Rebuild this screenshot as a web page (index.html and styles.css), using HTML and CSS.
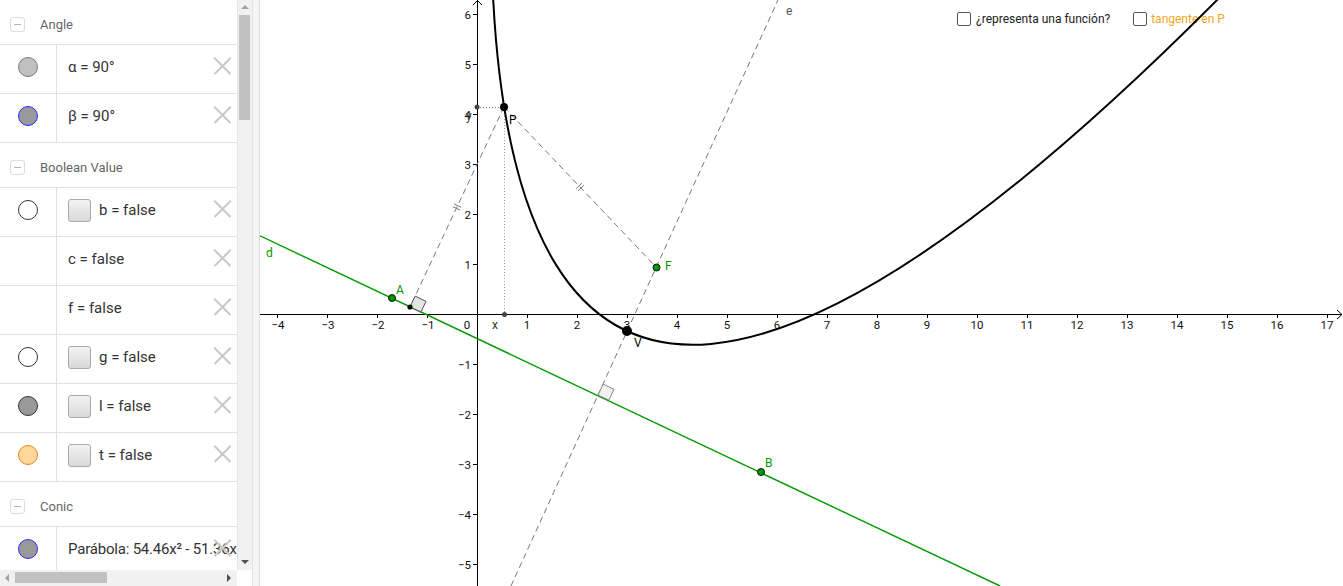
FILE: index.html
```html
<!DOCTYPE html>
<html>
<head>
<meta charset="utf-8">
<link rel="stylesheet" href="styles.css">
</head>
<body>
<div class="app">
  <div class="panel">
    <div class="list">
      <div class="header"><span class="minus"></span><span class="htext">Angle</span></div>
      <div class="item"><div class="mark"><span class="dot d-alpha"></span></div><div class="body"><span class="txt">α = 90°</span></div><span class="del"></span></div>
      <div class="item"><div class="mark"><span class="dot d-beta"></span></div><div class="body"><span class="txt">β = 90°</span></div><span class="del"></span></div>
      <div class="header"><span class="minus"></span><span class="htext">Boolean Value</span></div>
      <div class="item"><div class="mark"><span class="dot d-white"></span></div><div class="body"><span class="cb"></span><span class="txt">b = false</span></div><span class="del"></span></div>
      <div class="item"><div class="mark"></div><div class="body"><span class="txt">c = false</span></div><span class="del"></span></div>
      <div class="item"><div class="mark"></div><div class="body"><span class="txt">f = false</span></div><span class="del"></span></div>
      <div class="item"><div class="mark"><span class="dot d-white"></span></div><div class="body"><span class="cb"></span><span class="txt">g = false</span></div><span class="del"></span></div>
      <div class="item"><div class="mark"><span class="dot d-gray"></span></div><div class="body"><span class="cb"></span><span class="txt">l = false</span></div><span class="del"></span></div>
      <div class="item"><div class="mark"><span class="dot d-orange"></span></div><div class="body"><span class="cb"></span><span class="txt">t = false</span></div><span class="del"></span></div>
      <div class="header"><span class="minus"></span><span class="htext">Conic</span></div>
      <div class="item"><div class="mark"><span class="dot d-beta"></span></div><div class="body"><span class="txt nowrap">Parábola: 54.46x² - 51.36x y</span></div><span class="del"></span></div>
    </div>
    <div class="vscroll">
      <span class="arr-up"></span>
      <span class="vthumb"></span>
      <span class="arr-down"></span>
    </div>
    <div class="hscroll">
      <span class="arr-left"></span>
      <span class="hthumb"></span>
      <span class="arr-right"></span>
    </div>
    <div class="corner"></div>
  </div>
  <div class="divider"></div>
  <div class="graphics">
    <div class="checks">
      <span class="gcb"></span><span class="glabel">¿representa una función?</span>
      <span class="gcb gcb2"></span><span class="glabel orange">tangente en P</span>
    </div>
    <svg class="plot" width="1084" height="586" viewBox="259 0 1084 586" xmlns="http://www.w3.org/2000/svg">
      <g stroke="#000" stroke-width="1" fill="none">
        <line x1="259" y1="314.5" x2="1341" y2="314.5"/>
        <polyline points="1336,310 1341,314.5 1336,319"/>
        <line x1="476.5" y1="0" x2="476.5" y2="586"/>
        <polyline points="472,5 476.5,0.5 481,5"/>
        <path d="M276.5 314v4 M326.5 314v4 M376.5 314v4 M426.5 314v4 M526.5 314v4 M576.5 314v4 M626.5 314v4 M676.5 314v4 M726.5 314v4 M776.5 314v4 M826.5 314v4 M876.5 314v4 M926.5 314v4 M976.5 314v4 M1026.5 314v4 M1076.5 314v4 M1126.5 314v4 M1176.5 314v4 M1226.5 314v4 M1276.5 314v4 M1326.5 314v4"/>
        <path d="M472 14.5h4 M472 64.5h4 M472 114.5h4 M472 164.5h4 M472 214.5h4 M472 264.5h4 M472 364.5h4 M472 414.5h4 M472 464.5h4 M472 514.5h4 M472 564.5h4"/>
      </g>
      <g class="ax" text-anchor="middle">
        <text x="277" y="329">−4</text>
        <text x="327" y="329">−3</text>
        <text x="377" y="329">−2</text>
        <text x="427" y="329">−1</text>
        <text x="466" y="329">0</text>
        <text x="526" y="329">1</text>
        <text x="576" y="329">2</text>
        <text x="626" y="329">3</text>
        <text x="676" y="329">4</text>
        <text x="726" y="329">5</text>
        <text x="776" y="329">6</text>
        <text x="826" y="329">7</text>
        <text x="876" y="329">8</text>
        <text x="926" y="329">9</text>
        <text x="976" y="329">10</text>
        <text x="1026" y="329">11</text>
        <text x="1076" y="329">12</text>
        <text x="1126" y="329">13</text>
        <text x="1176" y="329">14</text>
        <text x="1226" y="329">15</text>
        <text x="1276" y="329">16</text>
        <text x="1326" y="329">17</text>
      </g>
      <g class="ax" text-anchor="end">
        <text x="470" y="19">6</text>
        <text x="470" y="69">5</text>
        <text x="470" y="119">4</text>
        <text x="470" y="169">3</text>
        <text x="470" y="219">2</text>
        <text x="470" y="269">1</text>
        <text x="470" y="369">−1</text>
        <text x="470" y="419">−2</text>
        <text x="470" y="469">−3</text>
        <text x="470" y="519">−4</text>
        <text x="470" y="569">−5</text>
      </g>
      <line x1="259" y1="235.8" x2="999" y2="586" stroke="#009900" stroke-width="1.4"/>
      <line x1="510" y1="586" x2="777" y2="0" stroke="#777" stroke-width="1" stroke-dasharray="6,4"/>
      <line x1="503" y1="107" x2="655" y2="267" stroke="#777" stroke-width="1" stroke-dasharray="6,4"/>
      <line x1="503" y1="107" x2="409" y2="307" stroke="#777" stroke-width="1" stroke-dasharray="6,4"/>
      <path d="M575.1 188.7 L580.9 183.1 M577.1 190.9 L582.9 185.3" stroke="#777" stroke-width="1" fill="none"/>
      <path d="M451.8 206.7 L459 210.1 M453 203.9 L460.2 207.3" stroke="#777" stroke-width="1" fill="none"/>
      <polygon points="409,307 419.9,312.1 425,301.3 414.1,296.1" fill="#ddd" fill-opacity="0.8" stroke="#555" stroke-width="1"/>
      <polygon points="597,395 607.9,400.1 613,389.3 602.1,384.2" fill="#eee" fill-opacity="0.8" stroke="#888" stroke-width="1"/>
      <line x1="476" y1="107.5" x2="503" y2="107.5" stroke="#777" stroke-width="1" stroke-dasharray="1,2"/>
      <line x1="503.5" y1="107" x2="503.5" y2="314" stroke="#999" stroke-width="1" stroke-dasharray="1,2"/>
      <path d="M491.8,-8.3 Q526.8,732.3 1294.3,-80.7" stroke="#000" stroke-width="2" fill="none"/>
      <circle cx="476" cy="107" r="2.5" fill="#444"/>
      <circle cx="503.5" cy="314.5" r="2.5" fill="#444"/>
      <circle cx="409" cy="307" r="2.6" fill="#000"/>
      <circle cx="391" cy="298" r="3.5" fill="#009900" stroke="#111" stroke-width="1"/>
      <circle cx="760" cy="472" r="3.5" fill="#009900" stroke="#111" stroke-width="1"/>
      <circle cx="655.5" cy="267.5" r="3.5" fill="#009900" stroke="#111" stroke-width="1"/>
      <circle cx="503" cy="107" r="4" fill="#000"/>
      <circle cx="626" cy="331" r="5" fill="#000"/>
      <g class="lbl">
        <text x="265" y="257" fill="#009900">d</text>
        <text x="785" y="15" fill="#555">e</text>
        <text x="395" y="294" fill="#009900">A</text>
        <text x="764" y="467" fill="#009900">B</text>
        <text x="664" y="270" fill="#009900">F</text>
        <text x="508" y="124" fill="#000">P</text>
        <text x="633" y="347" fill="#000">V</text>
        <text x="491" y="329" fill="#333">x</text>
        <text x="465" y="120" fill="#333">y</text>
      </g>
    </svg>
  </div>
</div>
</body>
</html>
```
FILE: styles.css
```css
html, body {
  margin: 0;
  padding: 0;
  background: #fff;
  font-family: Roboto, "Liberation Sans", sans-serif;
}
.app {
  display: flex;
  width: 1343px;
  height: 586px;
  overflow: hidden;
}
.panel {
  display: grid;
  grid-template-columns: 237px 15px;
  grid-template-rows: 570px 16px;
  width: 252px;
  flex: none;
}
.list {
  overflow: hidden;
  background: #fff;
}
.header {
  border-bottom: 1px solid #e0e0e0;
  display: flex;
  align-items: center;
  padding-top: 5px;
  box-sizing: border-box;
  height: 45px;
}
.minus {
  width: 13px;
  height: 13px;
  border: 1px solid #dcdcdc;
  border-radius: 3px;
  margin-left: 10px;
  position: relative;
  flex: none;
}
.minus::after {
  content: "";
  position: absolute;
  left: 3px;
  right: 3px;
  top: 6px;
  height: 1px;
  background: #b5b5b5;
}
.htext {
  margin-left: 15px;
  font-size: 13px;
  color: #666;
}
.item {
  height: 49px;
  box-sizing: border-box;
  border-bottom: 1px solid #e0e0e0;
  display: flex;
  align-items: stretch;
  position: relative;
}
.mark {
  width: 56px;
  border-right: 1px solid #e0e0e0;
  display: flex;
  align-items: center;
  justify-content: center;
  padding-bottom: 4px;
  flex: none;
}
.dot {
  width: 18px;
  height: 18px;
  border-radius: 50%;
  border: 1px solid #555;
  box-sizing: content-box;
}
.d-alpha { background: #c0c0c0; border-color: #777; }
.d-beta { background: #999; border-color: #2b2bff; }
.d-white { background: #fff; border-color: #333; }
.d-gray { background: #999; border-color: #333; }
.d-orange { background: #ffd699; border-color: #e08a1e; }
.body {
  display: flex;
  align-items: center;
  padding-left: 11px;
  padding-bottom: 4px;
  flex: 1;
  overflow: hidden;
  white-space: nowrap;
}
.cb {
  width: 21px;
  height: 21px;
  border: 1px solid #aaa;
  border-radius: 3px;
  background: linear-gradient(#f2f2f2, #d9d9d9);
  margin-right: 8px;
  flex: none;
}
.txt {
  font-size: 15px;
  color: #333;
}
.nowrap {
  white-space: nowrap;
  letter-spacing: -0.2px;
}
.del {
  position: absolute;
  right: 6px;
  top: 12px;
  width: 18px;
  height: 18px;
}
.del::before, .del::after {
  content: "";
  position: absolute;
  left: -2px;
  top: 8px;
  width: 23px;
  height: 1.6px;
  background: #c8c8c8;
  transform: rotate(45deg);
}
.del::after {
  transform: rotate(-45deg);
}
.vscroll {
  background: #f1f1f1;
  border-left: 1px solid #e6e6e6;
  position: relative;
}
.vthumb {
  position: absolute;
  left: 1px;
  top: 15px;
  width: 11px;
  height: 105px;
  background: #c1c1c1;
}
.arr-up, .arr-down {
  position: absolute;
  left: 3px;
  width: 0;
  height: 0;
  border-left: 4px solid transparent;
  border-right: 4px solid transparent;
}
.arr-up {
  top: 5px;
  border-bottom: 4px solid #a3a3a3;
}
.arr-down {
  bottom: 6px;
  border-top: 4px solid #505050;
}
.hscroll {
  background: #f1f1f1;
  position: relative;
}
.hthumb {
  position: absolute;
  left: 15px;
  top: 2px;
  width: 92px;
  height: 11px;
  background: #c1c1c1;
}
.arr-left, .arr-right {
  position: absolute;
  top: 4px;
  width: 0;
  height: 0;
  border-top: 4px solid transparent;
  border-bottom: 4px solid transparent;
}
.arr-left {
  left: 5px;
  border-right: 4px solid #a3a3a3;
}
.arr-right {
  right: 6px;
  border-left: 4px solid #505050;
}
.corner {
  background: #fff;
}
.divider {
  width: 6px;
  flex: none;
  background: #f5f5f5;
  border-left: 1px solid #e4e4e4;
  border-right: 1px solid #dcdcdc;
}
.graphics {
  position: relative;
  flex: 1;
  height: 586px;
  overflow: hidden;
}
.plot {
  position: relative;
  z-index: 1;
  display: block;
}
.checks {
  position: absolute;
  z-index: 0;
  left: 697px;
  top: 12px;
  display: flex;
  align-items: center;
}
.gcb {
  width: 12px;
  height: 12px;
  border: 1px solid #555;
  border-radius: 2px;
  margin-right: 5px;
}
.gcb2 {
  margin-left: 23px;
  margin-right: 4px;
}
.glabel {
  font-size: 12px;
  color: #222;
}
.orange {
  color: #f5a623;
}
.ax {
  font-family: Roboto, "Liberation Sans", sans-serif;
  font-size: 11.5px;
  fill: #111;
}
.lbl {
  font-family: Roboto, "Liberation Sans", sans-serif;
  font-size: 12px;
}
```
